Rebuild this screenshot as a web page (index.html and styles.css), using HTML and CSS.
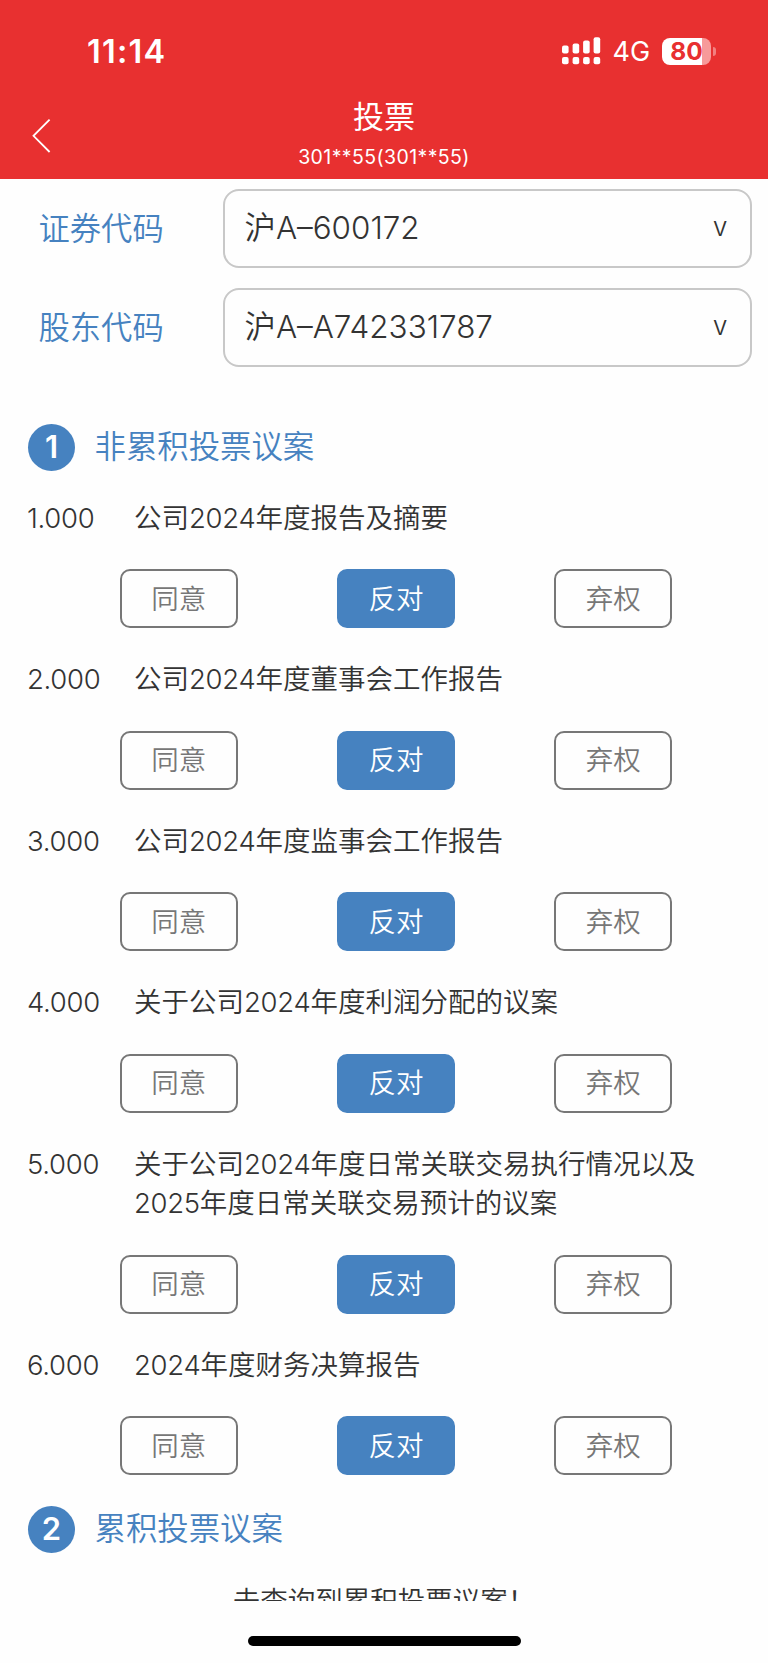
FILE: index.html
```html
<!DOCTYPE html>
<html lang="zh-CN">

<head>
	<meta charset="utf-8">
	<title>投票</title>
	<link rel="stylesheet" href="styles.css">
</head>

<body>
	<header class="header">
		<div class="status">
			<span class="time">11:14</span>
			<svg class="signal" width="39" height="28" viewBox="0 0 39 28" fill="#fff">
				<rect x="0" y="8.5" width="6.6" height="8" rx="2" />
				<rect x="10.6" y="6.5" width="6.6" height="10" rx="2" />
				<rect x="21.1" y="3.5" width="6.6" height="13" rx="2" />
				<rect x="31.6" y="0.2" width="6.6" height="16.3" rx="2" />
				<rect x="0" y="20" width="6.6" height="7.3" rx="2" />
				<rect x="10.6" y="20" width="6.6" height="7.3" rx="2" />
				<rect x="21.1" y="20" width="6.6" height="7.3" rx="2" />
				<rect x="31.6" y="20" width="6.6" height="7.3" rx="2" />
			</svg>
			<span class="net">4G</span>
			<span class="battery">80</span>
			<span class="battery-cap"></span>
		</div>
		<div class="nav">
			<svg class="back" width="20" height="36" viewBox="0 0 20 36" fill="none" stroke="#fff" stroke-width="1.8">
				<path d="M17.6 1.6L1.5 17.8L17.6 34" />
			</svg>
			<div class="nav-title">
				<h1>投票</h1>
				<p>301**55(301**55)</p>
			</div>
		</div>
	</header>

	<main class="content">
		<div class="field">
			<label>证券代码</label>
			<div class="select"><span>沪A–600172</span><i>V</i></div>
		</div>
		<div class="field">
			<label>股东代码</label>
			<div class="select"><span>沪A–A742331787</span><i>V</i></div>
		</div>

		<h2 class="section"><span class="num">1</span><span class="name">非累积投票议案</span></h2>

		<div class="item">
			<div class="item-title"><span class="no">1.000</span><p>公司<b>2024</b>年度报告及摘要</p></div>
			<div class="btns"><button>同意</button><button class="active">反对</button><button>弃权</button></div>
		</div>
		<div class="item">
			<div class="item-title"><span class="no">2.000</span><p>公司<b>2024</b>年度董事会工作报告</p></div>
			<div class="btns"><button>同意</button><button class="active">反对</button><button>弃权</button></div>
		</div>
		<div class="item">
			<div class="item-title"><span class="no">3.000</span><p>公司<b>2024</b>年度监事会工作报告</p></div>
			<div class="btns"><button>同意</button><button class="active">反对</button><button>弃权</button></div>
		</div>
		<div class="item">
			<div class="item-title"><span class="no">4.000</span><p>关于公司<b>2024</b>年度利润分配的议案</p></div>
			<div class="btns"><button>同意</button><button class="active">反对</button><button>弃权</button></div>
		</div>
		<div class="item">
			<div class="item-title"><span class="no">5.000</span><p>关于公司<b>2024</b>年度日常关联交易执行情况以及<br><b>2025</b>年度日常关联交易预计的议案</p></div>
			<div class="btns"><button>同意</button><button class="active">反对</button><button>弃权</button></div>
		</div>
		<div class="item">
			<div class="item-title"><span class="no">6.000</span><p><b>2024</b>年度财务决算报告</p></div>
			<div class="btns"><button>同意</button><button class="active">反对</button><button>弃权</button></div>
		</div>

		<h2 class="section second"><span class="num">2</span><span class="name">累积投票议案</span></h2>
		<p class="empty">未查询到累积投票议案！</p>
	</main>

	<footer class="home"><span></span></footer>
</body>

</html>
```
FILE: styles.css
```css
* {
	box-sizing: border-box;
	margin: 0;
	padding: 0;
}

body {
	width: 768px;
	height: 1663px;
	overflow: hidden;
	display: flex;
	flex-direction: column;
	background: #fefefe;
	color: #333;
	font-family: Inter, "Noto Sans CJK SC", sans-serif;
	font-size: 27.5px;
	font-weight: 350;
}

/* шапка */
.header {
	height: 179px;
	flex: none;
	background: #e83030;
	color: #fff;
}

.status {
	display: flex;
	align-items: center;
	height: 102px;
	padding: 0 52px 0 87px;
}

.time {
	font-size: 32.5px;
	font-weight: 600;
	letter-spacing: 1.2px;
	margin-right: auto;
}

.signal {
	margin-right: 12px;
}

.net {
	width: 37.5px;
	margin-right: 12px;
	font-size: 27px;
	font-weight: 400;
	line-height: 34px;
	padding-top: 1px;
	white-space: nowrap;
}

.battery {
	width: 49px;
	height: 27px;
	border-radius: 8px;
	background: linear-gradient(90deg, #fff 40px, #f79a9a 40px);
	color: #e83030;
	font-size: 24.5px;
	font-weight: 700;
	line-height: 27px;
	text-align: center;
}

.battery-cap {
	width: 3px;
	height: 9px;
	margin-left: 2px;
	border-radius: 0 3px 3px 0;
	background: #f28080;
}

.nav {
	display: grid;
	grid-template-columns: 100px 1fr 100px;
	height: 77px;
}

.back {
	margin: 16px 0 0 32px;
}

.nav-title {
	text-align: center;
}

.nav-title h1 {
	margin-top: -6px;
	font-size: 31px;
	font-weight: 400;
	line-height: 42px;
}

.nav-title p {
	margin-top: 6px;
	font-size: 19.5px;
	font-weight: 400;
	line-height: 27px;
	letter-spacing: 0.4px;
}

/* содержимое, обрезается снизу */
.content {
	height: 1422px;
	flex: none;
	overflow: hidden;
	padding-top: 10px;
}

.field {
	display: flex;
	height: 79px;
	margin-bottom: 19.5px;
	padding-right: 16px;
}

.field label {
	width: 223px;
	padding-left: 38.5px;
	color: #4682c0;
	font-size: 31.3px;
	line-height: 80px;
}

.select {
	flex: 1;
	display: flex;
	justify-content: space-between;
	padding: 0 23px 0 19.5px;
	border: 2px solid #c8c8c8;
	border-radius: 16px;
	font-size: 31.4px;
	line-height: 74px;
}

.select i {
	font-size: 20px;
	font-style: normal;
	font-weight: 400;
	line-height: 77px;
}

.section {
	display: flex;
	align-items: center;
	height: 48px;
	margin: 57px 0 27px;
	padding-left: 28px;
	color: #4682c0;
	font-size: 31.4px;
	font-weight: 350;
}

.num {
	width: 47px;
	height: 47px;
	margin-right: 19.5px;
	border-radius: 50%;
	background: #4682c0;
	color: #fff;
	font-size: 31px;
	font-weight: 600;
	line-height: 46px;
	text-align: center;
}

.name {
	height: 48px;
	line-height: 46px;
}

.item {
	margin-bottom: 32.1px;
}

.item-title {
	display: flex;
	padding-left: 27px;
	line-height: 39.5px;
}

.no {
	width: 107px;
	letter-spacing: -0.3px;
}

.item-title b {
	font-weight: 350;
	letter-spacing: -0.3px;
}

.btns {
	display: flex;
	gap: 99.3px;
	margin-top: 31px;
	padding-left: 119.7px;
}

button {
	width: 118px;
	height: 59px;
	border: 2px solid #777;
	border-radius: 10px;
	background: #fefefe;
	color: #777;
	font: inherit;
	line-height: 53px;
	padding-top: 1px;
}

button.active {
	border-color: #4682c0;
	background: #4682c0;
	color: #fff;
}

.second {
	margin: -2px 0 28px;
}

.empty {
	line-height: 39.5px;
	text-align: center;
}

/* полоска внизу экрана */
.home {
	flex: 1;
	padding-top: 35px;
}

.home span {
	display: block;
	width: 273px;
	height: 10px;
	margin: 0 auto;
	border-radius: 5px;
	background: #000;
}
```
